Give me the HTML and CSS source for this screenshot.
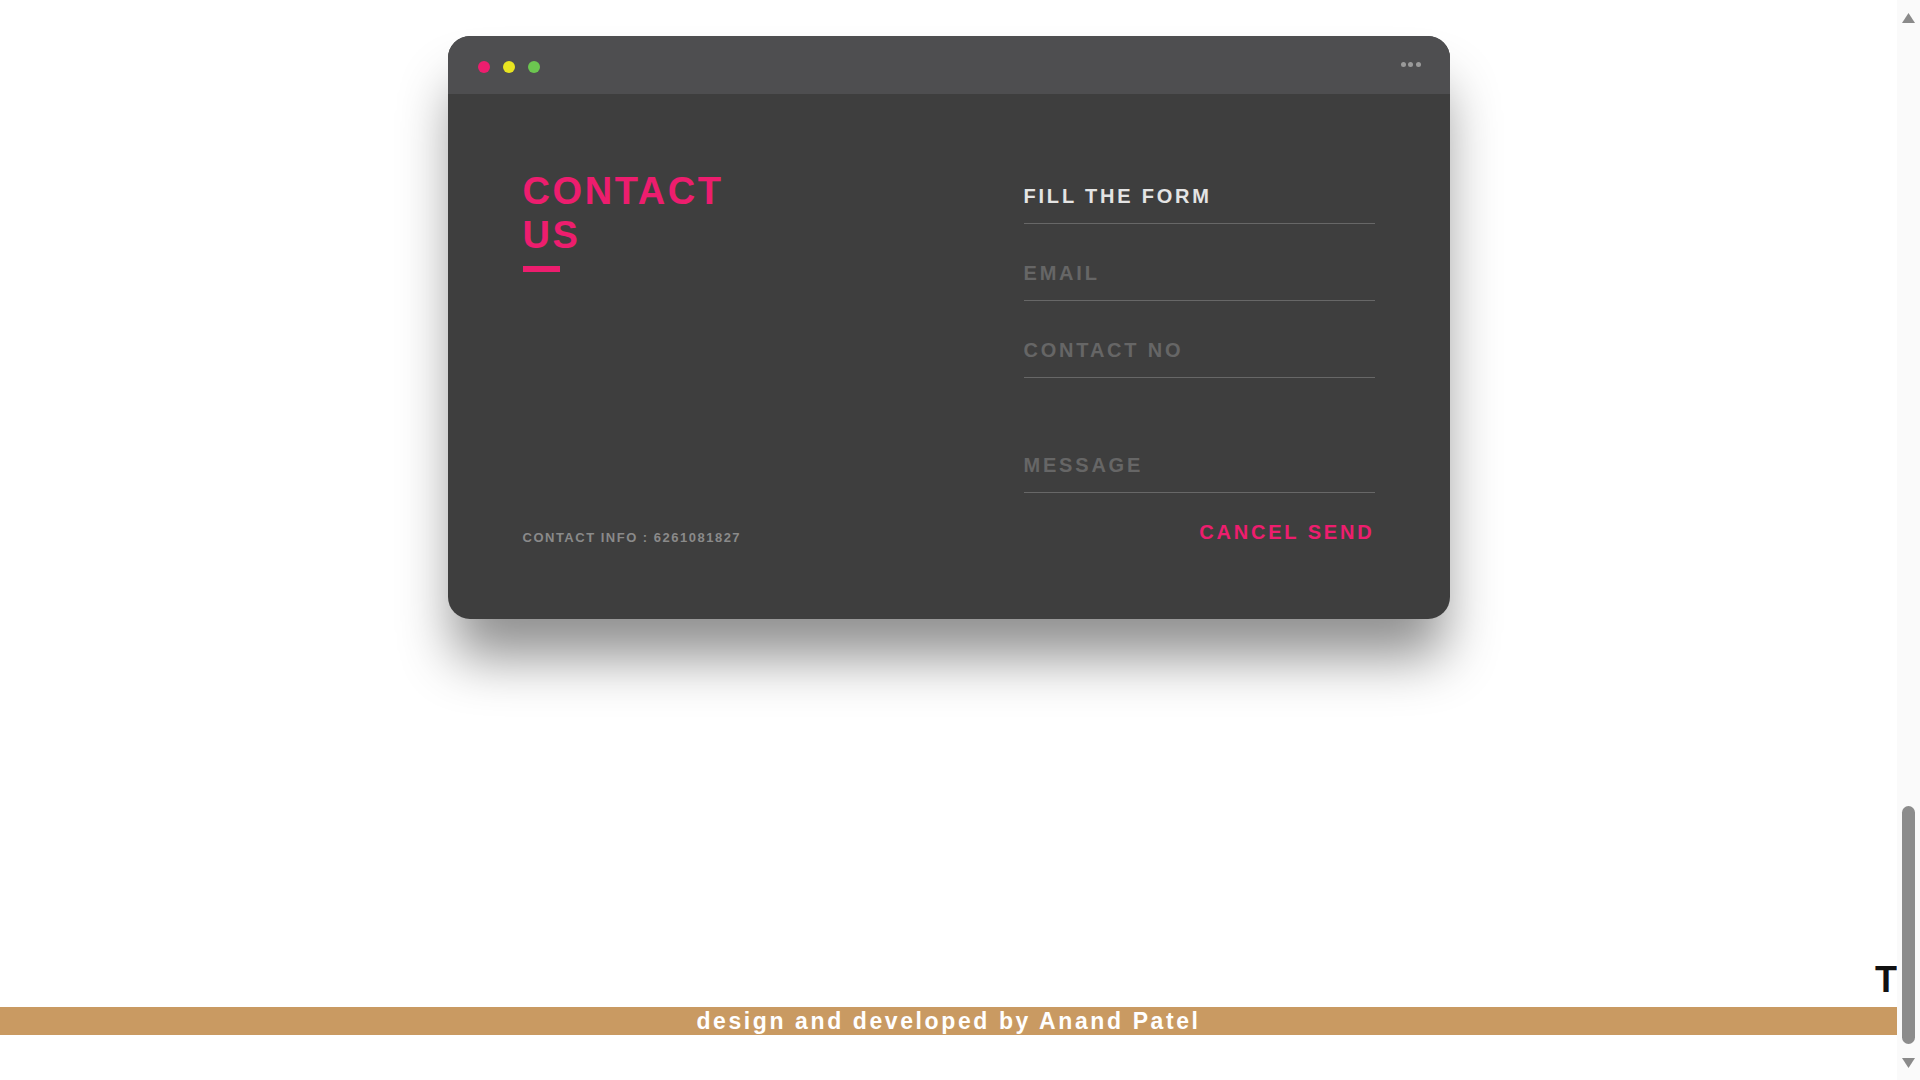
FILE: index.html
```html
<!DOCTYPE html>
<html lang="en">
<head>
<meta charset="utf-8">
<title>Contact</title>
<link rel="stylesheet" href="styles.css">
</head>
<body>
<div class="page">
  <section class="contact">
    <div class="card">
      <div class="card-head">
        <div class="lights">
          <span class="light pink"></span>
          <span class="light yellow"></span>
          <span class="light green"></span>
        </div>
        <div class="menu"><span></span><span></span><span></span></div>
      </div>
      <div class="card-body">
        <div class="left">
          <div class="title-wrap">
            <h1 class="title">CONTACT US</h1>
            <div class="title-bar"></div>
          </div>
          <p class="info">CONTACT INFO : 6261081827</p>
        </div>
        <form class="right">
          <h2 class="form-title">FILL THE FORM</h2>
          <input class="field" type="text" placeholder="EMAIL">
          <input class="field" type="text" placeholder="CONTACT NO">
          <textarea class="field message" rows="1" placeholder="MESSAGE"></textarea>
          <div class="actions">
            <button type="button" class="btn">CANCEL</button> <button type="button" class="btn">SEND</button>
          </div>
        </form>
      </div>
    </div>
  </section>
  <div class="grow"></div>
  <div class="top-row"><span class="top-t">T</span></div>
  <footer class="footer">design and developed by Anand Patel</footer>
  <div class="bottom-gap"></div>
</div>
<div class="scrollbar">
  <svg class="arrow up" width="13" height="10" viewBox="0 0 13 10"><polygon points="6.5,0 13,10 0,10" fill="#8a8a8a"/></svg>
  <div class="track"><div class="thumb"></div></div>
  <svg class="arrow down" width="13" height="10" viewBox="0 0 13 10"><polygon points="0,0 13,0 6.5,10" fill="#8a8a8a"/></svg>
</div>
</body>
</html>
```

FILE: styles.css
```css
* { box-sizing: border-box; }

html, body {
  margin: 0;
  height: 100%;
  overflow: hidden;
}

body {
  display: flex;
  background: #ffffff;
  font-family: "Liberation Sans", Arial, sans-serif;
}

.page {
  flex: 1;
  display: flex;
  flex-direction: column;
  min-width: 0;
}

.contact {
  padding-top: 36px;
  display: flex;
  justify-content: center;
}

.card {
  width: 1002px;
  border-radius: 22px;
  background: #3e3e3e;
  overflow: hidden;
  box-shadow: 0 44px 54px -6px rgba(0, 0, 0, 0.44);
}

.card-head {
  height: 58px;
  background: #4e4e50;
  display: flex;
  justify-content: space-between;
  align-items: flex-start;
  padding: 25px 29px 0 30px;
}

.lights {
  display: flex;
  gap: 13px;
}

.light {
  width: 12px;
  height: 12px;
  border-radius: 50%;
}
.light.pink { background: #ed1d6e; }
.light.yellow { background: #e8e421; }
.light.green { background: #6cc650; }

.menu {
  display: flex;
  gap: 2.5px;
  margin-top: 1px;
}
.menu span {
  width: 5px;
  height: 5px;
  border-radius: 50%;
  background: #9a9a9a;
}

.card-body {
  display: grid;
  grid-template-columns: 1fr 351px;
  padding: 75px 75px 75px 75px;
}

.left {
  display: flex;
  flex-direction: column;
  justify-content: space-between;
}

.title {
  margin: 0;
  max-width: 240px;
  font-size: 38px;
  line-height: 44px;
  font-weight: bold;
  letter-spacing: 2.6px;
  color: #ed1d6e;
}

.title-bar {
  width: 37px;
  height: 6px;
  margin-top: 9px;
  background: #ed1d6e;
}

.info {
  margin: 0;
  font-size: 13px;
  line-height: 12px;
  font-weight: bold;
  letter-spacing: 1.5px;
  color: #8a8a8a;
}

.right {
  padding-top: 16px;
  display: flex;
  flex-direction: column;
}

.form-title {
  margin: 0;
  padding-bottom: 15px;
  border-bottom: 1px solid #676767;
  font-size: 20px;
  line-height: 23px;
  font-weight: bold;
  letter-spacing: 2.8px;
  color: #e4e4e4;
}

.field {
  display: block;
  width: 100%;
  height: 77px;
  margin: 0;
  padding: 38px 0 15px 0;
  border: none;
  border-bottom: 1px solid #676767;
  border-radius: 0;
  background: transparent;
  outline: none;
  font-family: "Liberation Sans", Arial, sans-serif;
  font-size: 20px;
  line-height: 23px;
  font-weight: bold;
  letter-spacing: 2.8px;
  color: #cfcfcf;
}

.field::placeholder {
  color: #666666;
  opacity: 1;
}

.field.message {
  height: 115px;
  padding-top: 76px;
  resize: none;
  overflow: hidden;
}

.actions {
  margin-top: 28px;
  text-align: right;
  font-size: 20px;
  line-height: 23px;
  letter-spacing: 2.8px;
}

.btn {
  padding: 0;
  margin: 0;
  border: none;
  background: none;
  font-family: "Liberation Sans", Arial, sans-serif;
  font-size: 20px;
  line-height: 23px;
  font-weight: bold;
  letter-spacing: 2.8px;
  color: #ed1d6e;
  cursor: pointer;
}

.grow { flex: 1; }

.top-row {
  display: flex;
  justify-content: flex-end;
  margin-bottom: 7px;
}

.top-t {
  display: block;
  width: 22px;
  font-size: 36px;
  font-weight: bold;
  color: #111111;
  line-height: 41px;
}

.footer {
  height: 28px;
  line-height: 28px;
  background: #c99a62;
  color: #ffffff;
  font-size: 23px;
  font-weight: bold;
  letter-spacing: 2.6px;
  text-align: center;
  white-space: nowrap;
}

.bottom-gap {
  height: 45px;
}

.scrollbar {
  width: 23px;
  flex: none;
  background: #fafafa;
  display: flex;
  flex-direction: column;
  align-items: center;
}

.arrow { display: block; flex: none; }
.arrow.up { margin-top: 13px; }
.arrow.down { margin-top: 14px; margin-bottom: 12px; }

.track {
  flex: 1;
  display: flex;
  flex-direction: column;
  justify-content: flex-end;
}

.thumb {
  width: 13px;
  height: 238px;
  border-radius: 7px;
  background: #8c8c8c;
}
```
